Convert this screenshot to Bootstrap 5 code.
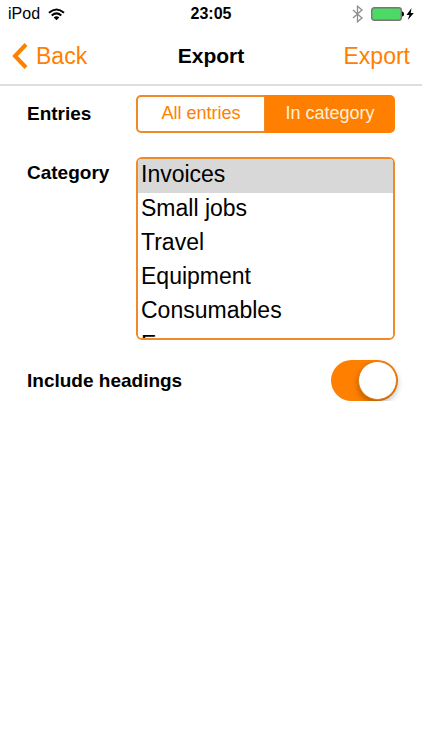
<!DOCTYPE html>
<html lang="en">
<head>
<meta charset="utf-8">
<meta name="viewport" content="width=device-width, initial-scale=1">
<title>Export</title>
<link href="https://cdn.jsdelivr.net/npm/bootstrap@5.3.0/dist/css/bootstrap.min.css" rel="stylesheet">
<style>
  :root { --accent: #ff8000; --edge: #f08a28; }
  body { font-family: "Liberation Sans", Arial, sans-serif; color: #000; background: #fff; }
  .status-bar, .title-bar { display: grid; grid-template-columns: 1fr auto 1fr; align-items: center; }
  .status-bar { height: 28px; font-size: 16px; line-height: 20px; padding: 0 8px; }
  .title-bar { height: 58px; font-size: 23px; line-height: 28px; padding: 0 12px; border-bottom: 2px solid #dedee1; }
  .title-bar h1 { font-size: 21px; line-height: 28px; }
  .bar-link { color: var(--accent); }
  .bar-link:hover { color: #c96500; }
  .export-form { padding: 9px 27px 0; }
  .form-line { display: grid; grid-template-columns: 109px 1fr; }
  .field-name { font-size: 19px; line-height: 32px; font-weight: 700; }
  .segments .btn {
    --bs-btn-color: var(--accent); --bs-btn-border-color: var(--edge);
    --bs-btn-hover-color: var(--accent); --bs-btn-hover-border-color: var(--edge);
    --bs-btn-active-color: #fff0dc; --bs-btn-active-bg: var(--accent); --bs-btn-active-border-color: var(--accent);
    --bs-btn-border-radius: 5px; --bs-btn-border-width: 2px;
    flex: 1 1 0; font-size: 18px; line-height: 24px; padding: 4px 0 6px;
  }
  .category-list {
    height: 183px; padding: 0; overflow: hidden scroll; scrollbar-width: none;
    border: 2px solid var(--edge); border-radius: 6px; background: #fff; color: #000;
    font-size: 23px;
  }
  .category-list::-webkit-scrollbar { display: none; }
  .category-list option { min-height: 34px; line-height: 28px; padding: 2px 3px 4px; }
  .category-list option:checked { background: #d8d8d8 linear-gradient(#d8d8d8, #d8d8d8); color: #000; }
  .category-list:focus { outline: 0; }
  .toggle-line { margin-right: -3px; }
  .toggle {
    appearance: none; width: 67px; height: 41px; margin: 0; padding: 1px;
    border-radius: 21px; background: #d8d8d8; display: flex; cursor: pointer;
  }
  .toggle::before {
    content: ""; width: 39px; height: 39px; border-radius: 50%; background: #fff;
    border: 1px solid #e57a12; box-shadow: 0 3px 6px rgba(0, 0, 0, .3);
  }
  .toggle:checked { background: var(--accent); justify-content: flex-end; }
</style>
</head>
<body>
<header>
  <div class="status-bar">
    <div class="d-flex align-items-center gap-2">
      <span>iPod</span>
      <svg width="17" height="13" viewBox="0 0 17 13" fill="none" stroke="#000" stroke-width="2" aria-label="Wi-Fi">
        <path d="M1 4.8Q8.500 -1.800 16 4.800M3.700 7.500Q8.500 3.300 13.300 7.500"/>
        <path d="M8.500 12.200L5.700 9.500Q8.500 7.200 11.300 9.500Z" fill="#000" stroke="none"/>
      </svg>
    </div>
    <time class="fw-bold">23:05</time>
    <div class="d-flex align-items-center justify-content-end">
      <svg class="me-2" width="11" height="18" viewBox="0 0 11 18" fill="none" stroke="#8f8f8f" stroke-width="1.300" aria-label="Bluetooth">
        <path d="M1 5L10 13L5.500 16.800V1.200L10 5L1 13"/>
      </svg>
      <svg width="43" height="14" viewBox="0 0 43 14" aria-label="Battery charging">
        <rect x=".7" y=".7" width="29.600" height="12.600" rx="2.500" fill="#4cd964" stroke="#777" stroke-width="1.400"/>
        <path d="M31 4.500H31.500Q33 5 33 7T31.500 9.500H31Z" fill="#000"/>
        <path d="M40.500 1L35.500 7.900H38.400L36.800 13L42.800 5.900H39.700Z" fill="#000"/>
      </svg>
    </div>
  </div>
  <nav class="title-bar">
    <a href="#" class="bar-link text-decoration-none d-flex align-items-center gap-2">
      <svg width="16" height="26" viewBox="0 0 16 26" fill="none" stroke="currentColor" stroke-width="4" aria-hidden="true"><path d="M14 1.500L3 13L14 24.500"/></svg>
      <span>Back</span>
    </a>
    <h1 class="m-0 fw-bold">Export</h1>
    <a href="#" class="bar-link text-decoration-none text-end">Export</a>
  </nav>
</header>
<main>
  <form class="export-form">
    <div class="form-line" role="group" aria-labelledby="entries-name">
      <span id="entries-name" class="field-name align-self-center">Entries</span>
      <div class="segments btn-group">
        <input type="radio" class="btn-check" name="entries" id="entries-all">
        <label class="btn" for="entries-all">All entries</label>
        <input type="radio" class="btn-check" name="entries" id="entries-category" checked>
        <label class="btn" for="entries-category">In category</label>
      </div>
    </div>
    <div class="form-line mt-4">
      <label for="category" class="field-name">Category</label>
      <select id="category" class="category-list w-100" size="5">
        <option selected>Invoices</option>
        <option>Small jobs</option>
        <option>Travel</option>
        <option>Equipment</option>
        <option>Consumables</option>
        <option>Expenses</option>
      </select>
    </div>
    <div class="toggle-line d-flex justify-content-between align-items-center mt-3 pt-1">
      <label for="headings" class="field-name">Include headings</label>
      <input type="checkbox" role="switch" id="headings" class="toggle" checked>
    </div>
  </form>
</main>
<script src="https://cdn.jsdelivr.net/npm/bootstrap@5.3.0/dist/js/bootstrap.bundle.min.js"></script>
</body>
</html>
